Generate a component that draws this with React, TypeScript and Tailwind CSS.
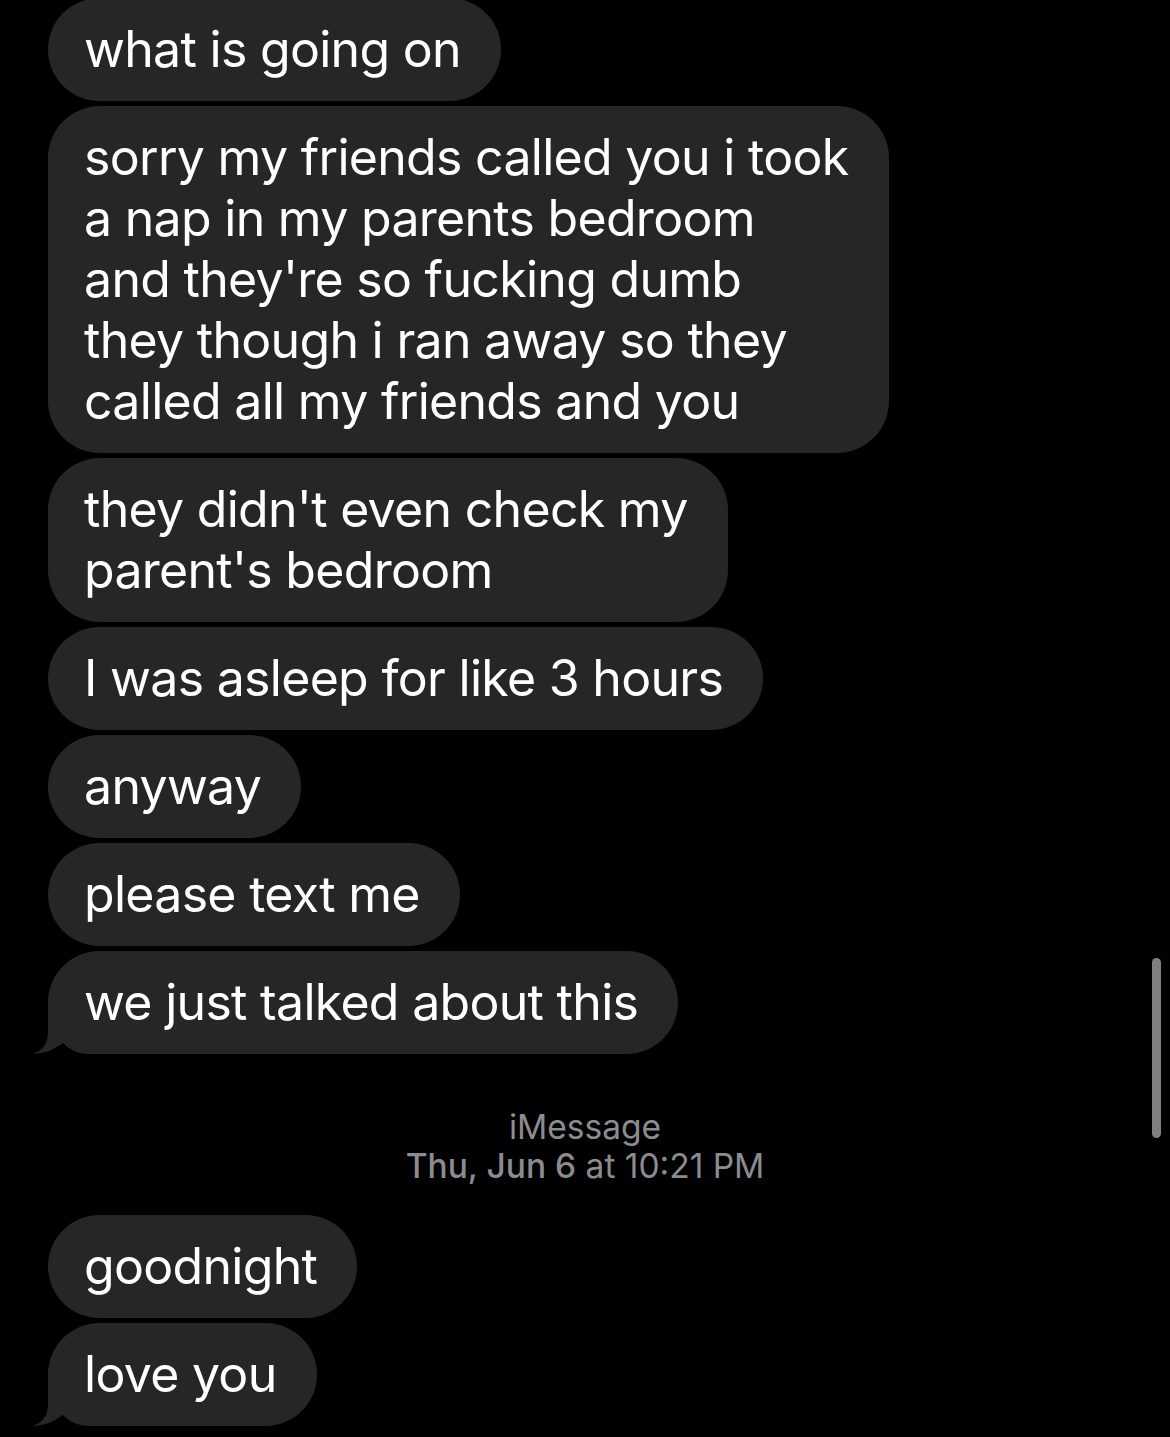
import type { ReactNode } from 'react';

const before = [
  ['what is going on'],
  [
    'sorry my friends called you i took',
    'a nap in my parents bedroom',
    "and they're so fucking dumb",
    'they though i ran away so they',
    'called all my friends and you',
  ],
  ["they didn't even check my", "parent's bedroom"],
  ['I was asleep for like 3 hours'],
  ['anyway'],
  ['please text me'],
  ['we just talked about this'],
];

const after = [['goodnight'], ['love you']];

function Tail() {
  return (
    <svg
      className="absolute left-[-20px] bottom-0"
      width="80"
      height="60"
      viewBox="0 0 80 60"
      fill="#262628"
    >
      <path d="M20 4 L20 38 C20 50 14 57 5 59.6 C14 60 24 57 35 49 C42 56 50 60 62 60 L80 60 L80 4 Z" />
    </svg>
  );
}

function Bubble({ lines, tail }: { lines: string[]; tail?: boolean }) {
  return (
    <div className="relative self-start">
      {tail && <Tail />}
      <div className="relative rounded-[52px] bg-[#262628] pl-[36px] pr-[40px] py-[21px] text-[50px] leading-[61px] tracking-[-0.7px] text-white">
        {lines.map((l, i) => (
          <div key={i} className="whitespace-nowrap">{l}</div>
        ))}
      </div>
    </div>
  );
}

function Group({ children }: { children: ReactNode }) {
  return <div className="flex flex-col gap-[5px]">{children}</div>;
}

export default function App() {
  return (
    <div
      className="relative h-[1437px] w-[1170px] overflow-hidden bg-black"
      style={{ fontFamily: 'Inter, "Noto Sans", sans-serif' }}
    >
      <div className="mt-[-2px] flex flex-col pl-[48px]">
        <Group>
          {before.map((lines, i) => (
            <Bubble key={i} lines={lines} tail={i === before.length - 1} />
          ))}
        </Group>

        <div className="mt-[54px] mb-[29px] -ml-[48px] text-center text-[33.5px] leading-[39px] text-[#8c8c90]">
          <div>iMessage</div>
          <div>
            <span className="font-medium">Thu, Jun 6</span> at 10:21 PM
          </div>
        </div>

        <Group>
          {after.map((lines, i) => (
            <Bubble key={i} lines={lines} tail={i === after.length - 1} />
          ))}
        </Group>
      </div>

      <div className="absolute left-[1152px] top-[958px] h-[180px] w-[9px] rounded-full bg-[#808080]" />
    </div>
  );
}
